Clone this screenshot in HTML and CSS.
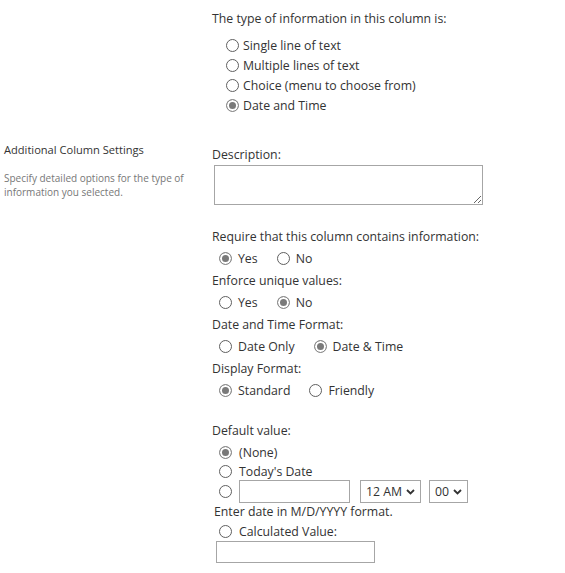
FILE: index.html
```html
<!DOCTYPE html>
<html lang="en">
<head>
<meta charset="utf-8">
<title>Column settings</title>
<link rel="stylesheet" href="styles.css">
</head>
<body>
<div class="page">
  <section class="section section-type">
    <div class="side"></div>
    <div class="main">
      <div class="label">The type of information in this column is:</div>
      <div class="type-list">
        <label class="type-row"><input type="radio" name="type"><span>Single line of text</span></label>
        <label class="type-row"><input type="radio" name="type"><span>Multiple lines of text</span></label>
        <label class="type-row"><input type="radio" name="type"><span>Choice (menu to choose from)</span></label>
        <label class="type-row"><input type="radio" name="type" checked><span>Date and Time</span></label>
      </div>
    </div>
  </section>

  <section class="section section-settings">
    <div class="side">
      <div class="side-title">Additional Column Settings</div>
      <div class="side-desc">Specify detailed options for the type of information you selected.</div>
    </div>
    <div class="main">
      <div class="label">Description:</div>
      <textarea class="desc-box"></textarea>

      <div class="group group-first">
        <div class="label">Require that this column contains information:</div>
        <div class="opt-row">
          <label class="opt"><input type="radio" name="req" checked><span>Yes</span></label>
          <label class="opt"><input type="radio" name="req"><span>No</span></label>
        </div>
      </div>

      <div class="group">
        <div class="label">Enforce unique values:</div>
        <div class="opt-row">
          <label class="opt"><input type="radio" name="uniq"><span>Yes</span></label>
          <label class="opt"><input type="radio" name="uniq" checked><span>No</span></label>
        </div>
      </div>

      <div class="group">
        <div class="label">Date and Time Format:</div>
        <div class="opt-row">
          <label class="opt"><input type="radio" name="fmt"><span>Date Only</span></label>
          <label class="opt"><input type="radio" name="fmt" checked><span>Date &amp; Time</span></label>
        </div>
      </div>

      <div class="group">
        <div class="label">Display Format:</div>
        <div class="opt-row">
          <label class="opt"><input type="radio" name="disp" checked><span>Standard</span></label>
          <label class="opt"><input type="radio" name="disp"><span>Friendly</span></label>
        </div>
      </div>

      <div class="group group-default">
        <div class="label">Default value:</div>
        <label class="def-row def-none"><input type="radio" name="def" checked><span>(None)</span></label>
        <label class="def-row def-today"><input type="radio" name="def"><span>Today's Date</span></label>
        <div class="def-row def-date">
          <input type="radio" name="def">
          <input type="text" class="date-input">
          <span class="select-wrap sel-hour">
            <select><option>12 AM</option></select>
            <svg class="chev" width="9" height="6" viewBox="0 0 9 6"><path d="M1 1 L4.5 4.5 L8 1" fill="none" stroke="#333" stroke-width="1.8"/></svg>
          </span>
          <span class="select-wrap sel-min">
            <select><option>00</option></select>
            <svg class="chev" width="9" height="6" viewBox="0 0 9 6"><path d="M1 1 L4.5 4.5 L8 1" fill="none" stroke="#333" stroke-width="1.8"/></svg>
          </span>
        </div>
        <div class="hint">Enter date in M/D/YYYY format.</div>
        <label class="def-row def-calc"><input type="radio" name="def"><span>Calculated Value:</span></label>
        <input type="text" class="calc-input">
      </div>
    </div>
  </section>
</div>
</body>
</html>
```

FILE: styles.css
```css
html, body {
  margin: 0;
  padding: 0;
  background: #fff;
}
body {
  font-family: "Segoe UI", "Open Sans", "Noto Sans", sans-serif;
  font-size: 12.3px;
  color: #333;
}
.page {
  width: 565px;
}
.section {
  display: grid;
  grid-template-columns: 212px 1fr;
}
.section-type {
  padding-top: 9px;
}
.section-settings {
  padding-top: 25px;
}
.label {
  line-height: 20px;
  height: 20px;
  white-space: nowrap;
}
.section-settings .main {
  padding-top: 5px;
}

/* radios */
input[type="radio"] {
  -webkit-appearance: none;
  appearance: none;
  width: 13px;
  height: 13px;
  margin: 0;
  border: 1px solid #5f5f5f;
  border-radius: 50%;
  background: #fff;
  box-sizing: border-box;
  flex: none;
}
input[type="radio"]:checked {
  border-color: #8a8a8a;
  background: #7a7a7a;
  box-shadow: inset 0 0 0 2px #fff;
}

.type-list {
  margin-top: 6px;
  padding-left: 14px;
}
.type-row {
  display: flex;
  align-items: center;
  height: 20px;
  gap: 4px;
}

/* left side */
.side {
  padding-left: 4px;
}
.side-title {
  font-size: 11.1px;
  line-height: 20px;
  color: #333;
}
.side-desc {
  margin-top: 11px;
  font-size: 10px;
  line-height: 14px;
  color: #777;
  width: 190px;
}

.desc-box {
  display: block;
  margin: 0 0 0 2px;
  width: 269px;
  height: 40px;
  box-sizing: border-box;
  border: 1px solid #a6a6a6;
  resize: both;
  font-family: inherit;
  font-size: 13px;
}

.group-first {
  margin-top: 22px;
}
.opt-row {
  display: flex;
  align-items: center;
  height: 22px;
  margin-bottom: 2px;
  padding-left: 7px;
  gap: 19px;
}
.opt {
  display: flex;
  align-items: center;
  gap: 6px;
}

.group-default {
  margin-top: 20px;
}
.def-row {
  display: flex;
  align-items: center;
  padding-left: 7px;
  gap: 7px;
}
.def-none {
  margin-top: 1px;
  height: 20px;
}
.def-today {
  height: 18px;
}
.def-date {
  height: 23px;
  gap: 0;
}
.date-input {
  margin-left: 7px;
  width: 111px;
  height: 23px;
  box-sizing: border-box;
  border: 1px solid #a6a6a6;
  padding: 0 4px;
  font-family: inherit;
  font-size: 12.3px;
}
.select-wrap {
  position: relative;
  display: inline-block;
  height: 23px;
}
.sel-hour {
  margin-left: 10px;
}
.sel-min {
  margin-left: 8px;
}
.select-wrap select {
  -webkit-appearance: none;
  appearance: none;
  height: 23px;
  box-sizing: border-box;
  border: 1px solid #a6a6a6;
  border-radius: 0;
  background: #fff;
  color: #333;
  font-family: inherit;
  font-size: 12.3px;
  padding: 0 0 0 5px;
  margin: 0;
}
.sel-hour select {
  width: 61px;
}
.sel-min select {
  width: 39px;
}
.chev {
  position: absolute;
  top: 9px;
  right: 6px;
  pointer-events: none;
}
.hint {
  line-height: 18px;
  height: 18px;
  padding-left: 2px;
  white-space: nowrap;
}
.def-calc {
  margin-top: 1px;
  height: 19px;
}
.calc-input {
  display: block;
  margin-left: 4px;
  width: 159px;
  height: 22px;
  box-sizing: border-box;
  border: 1px solid #a6a6a6;
  font-family: inherit;
  font-size: 13px;
}
```
